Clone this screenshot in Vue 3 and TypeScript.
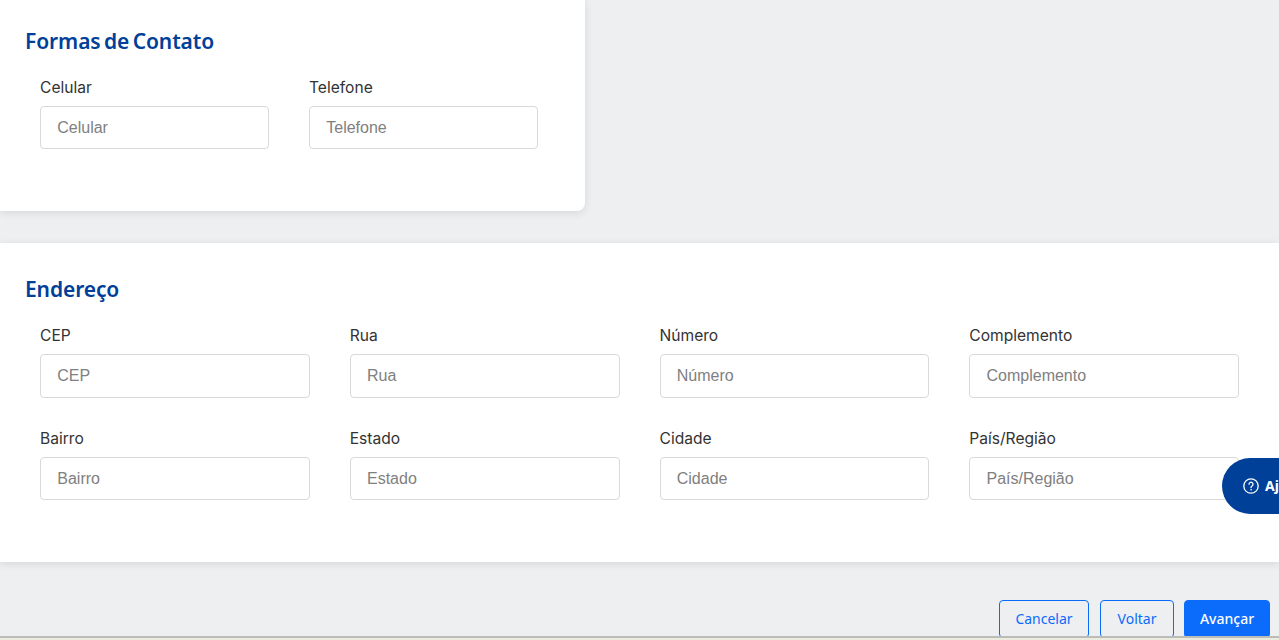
<script setup lang="ts">
const contact: string[] = ['Celular', 'Telefone']
const address: string[] = ['CEP', 'Rua', 'Número', 'Complemento', 'Bairro', 'Estado', 'Cidade', 'País/Região']
</script>

<template>
  <div class="page">
    <section class="card contact">
      <h2 class="title">Formas de Contato</h2>
      <div class="grid two">
        <label v-for="f in contact" :key="f" class="field">
          <span class="label">{{ f }}</span>
          <input class="input" :placeholder="f" />
        </label>
      </div>
    </section>

    <section class="card address">
      <h2 class="title">Endereço</h2>
      <div class="grid four">
        <label v-for="f in address" :key="f" class="field">
          <span class="label">{{ f }}</span>
          <input class="input" :placeholder="f" />
        </label>
      </div>
    </section>

    <footer class="actions">
      <button class="btn outline cancel">Cancelar</button>
      <button class="btn outline back">Voltar</button>
      <button class="btn primary next">Avançar</button>
    </footer>
    <div class="strip"></div>

    <button class="help">
      <svg width="16" height="16" viewBox="0 0 16 16" fill="none" stroke="#fff" stroke-width="1.3" stroke-linecap="round">
        <circle cx="8" cy="8" r="7.2" />
        <path d="M6 6.2a2 2 0 1 1 3 1.8c-.7.4-1 .8-1 1.5" />
        <circle cx="8" cy="11.8" r=".4" fill="#fff" stroke-width=".6" />
      </svg>
      <span class="help-text">Ajuda</span>
    </button>
  </div>
</template>

<style>
html, body { margin: 0; background: #eeeff1; }
</style>

<style scoped>
.page {
  position: relative;
  width: 1279px;
  height: 640px;
  overflow: hidden;
  display: flex;
  flex-direction: column;
  background: #eeeff1;
  font-family: Inter, "Liberation Sans", sans-serif;
}
.card {
  background: #fff;
  box-sizing: border-box;
  padding: 26px 0 0 25px;
  box-shadow: 0 2px 8px rgba(0, 0, 0, 0.1);
}
.contact {
  width: 585px;
  height: 211px;
  border-bottom-right-radius: 8px;
  padding-right: 47px;
}
.address {
  margin-top: 32px;
  height: 319px;
  padding-top: 31px;
  padding-right: 40px;
}
.title {
  margin: 0 0 18.75px;
  font-family: "Noto Sans", sans-serif;
  font-size: 21px;
  line-height: 30px;
  font-weight: 600;
  color: #004098;
  letter-spacing: -0.1px;
  word-spacing: -1.9px;
}
.address .title { margin-bottom: 19.25px; }
.grid {
  display: grid;
  column-gap: 40px;
  row-gap: 28.1px;
  margin-left: 15px;
}
.two { grid-template-columns: 229px 229px; }
.four { grid-template-columns: repeat(4, 1fr); }
.field { display: flex; flex-direction: column; }
.label {
  font-size: 15.6px;
  line-height: 24px;
  color: #333;
  padding-top: 1px;
  margin-bottom: 6px;
}
.input {
  box-sizing: border-box;
  width: 100%;
  height: 43.5px;
  padding: 0 16.25px;
  border: 1px solid #d9d9d9;
  border-radius: 4px;
  background: #fff;
  font-family: "Liberation Sans", sans-serif;
  font-size: 16px;
  color: #333;
  outline: none;
}
.input::placeholder { color: #808080; opacity: 1; }
.actions {
  height: 74px;
  flex: none;
  box-sizing: border-box;
  padding: 38px 9px 0 0;
  display: flex;
  justify-content: flex-end;
  gap: 10px;
  overflow: hidden;
}
.btn {
  flex: none;
  box-sizing: border-box;
  height: 38px;
  border-radius: 4px;
  font-family: "Noto Sans", sans-serif;
  font-size: 14px;
  padding: 0 0 2px;
  cursor: pointer;
}
.outline {
  background: transparent;
  border: 1px solid #0b6bfb;
  color: #0b6bfb;
}
.cancel { width: 90px; margin-right: 1px; }
.back { width: 74px; }
.primary {
  background: #0b6bfb;
  border: 1px solid #0b6bfb;
  color: #fff;
  font-weight: 500;
}
.next { width: 86px; }
.strip {
  height: 4px;
  flex: none;
  background: linear-gradient(#bdbdb7 0 2px, #ecebdf 2px);
}
.help {
  position: absolute;
  left: 1222px;
  top: 458px;
  width: 120px;
  height: 56px;
  border: 0;
  padding: 0 0 0 21px;
  border-radius: 28px;
  background: #004098;
  color: #fff;
  display: flex;
  align-items: center;
  gap: 6px;
  font-family: "Noto Sans", sans-serif;
  font-size: 14px;
  font-weight: 700;
}
.help-text { margin-bottom: 2px; }
</style>
